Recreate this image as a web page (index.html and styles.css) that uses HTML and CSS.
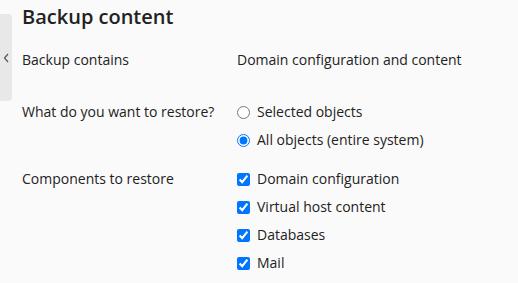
FILE: index.html
```html
<!doctype html>
<html lang="en">
<head>
  <meta charset="UTF-8" />
  <meta name="viewport" content="width=device-width, initial-scale=1.0" />
  <title>Backup content</title>
  <link rel="stylesheet" href="styles.css">
</head>
<body>
<div class="side-tab">
  <svg width="6" height="10" viewBox="0 0 6 10"><path d="M5 1 L1.5 5 L5 9" fill="none" stroke="#555" stroke-width="1.2"/></svg>
</div>
<div class="panel">
  <h2>Backup content</h2>
  <div class="form-row">
    <div class="label">Backup contains</div>
    <div class="value">Domain configuration and content</div>
  </div>
  <div class="form-row row-radios">
    <div class="label">What do you want to restore?</div>
    <div class="value options">
      <label class="option"><input type="radio" name="restore" /> Selected objects</label>
      <label class="option"><input type="radio" name="restore" checked /> All objects (entire system)</label>
    </div>
  </div>
  <div class="form-row row-checks">
    <div class="label">Components to restore</div>
    <div class="value options">
      <label class="option"><input type="checkbox" checked /> Domain configuration</label>
      <label class="option"><input type="checkbox" checked /> Virtual host content</label>
      <label class="option"><input type="checkbox" checked /> Databases</label>
      <label class="option"><input type="checkbox" checked /> Mail</label>
    </div>
  </div>
</div>
</body>
</html>
```

FILE: styles.css
```css
body {
  font-family: "Open Sans", "Noto Sans", Arial, sans-serif;
  background-color: #fafafa;
  color: #222;
  margin: 0;
  padding: 0;
  font-size: 14px;
}
.side-tab {
  position: absolute;
  left: 0;
  top: 14px;
  width: 12px;
  height: 87px;
  background-color: #e8e8e8;
  border-radius: 0 4px 4px 0;
  display: flex;
  align-items: center;
  justify-content: center;
  padding-top: 1px;
  box-sizing: border-box;
}
.panel {
  padding: 3px 0 0 22px;
}
h2 {
  font-size: 20px;
  font-weight: 600;
  line-height: 28px;
  margin: 0 0 15px 0;
  color: #222;
}
.form-row {
  display: flex;
  line-height: 28px;
}
.label {
  width: 215px;
  flex-shrink: 0;
}
.row-radios {
  margin-top: 24px;
}
.row-checks {
  margin-top: 11px;
}
.options {
  display: flex;
  flex-direction: column;
}
.option {
  display: flex;
  align-items: center;
  gap: 7px;
}
.option input {
  margin: 0;
  width: 13px;
  height: 13px;
}
```
